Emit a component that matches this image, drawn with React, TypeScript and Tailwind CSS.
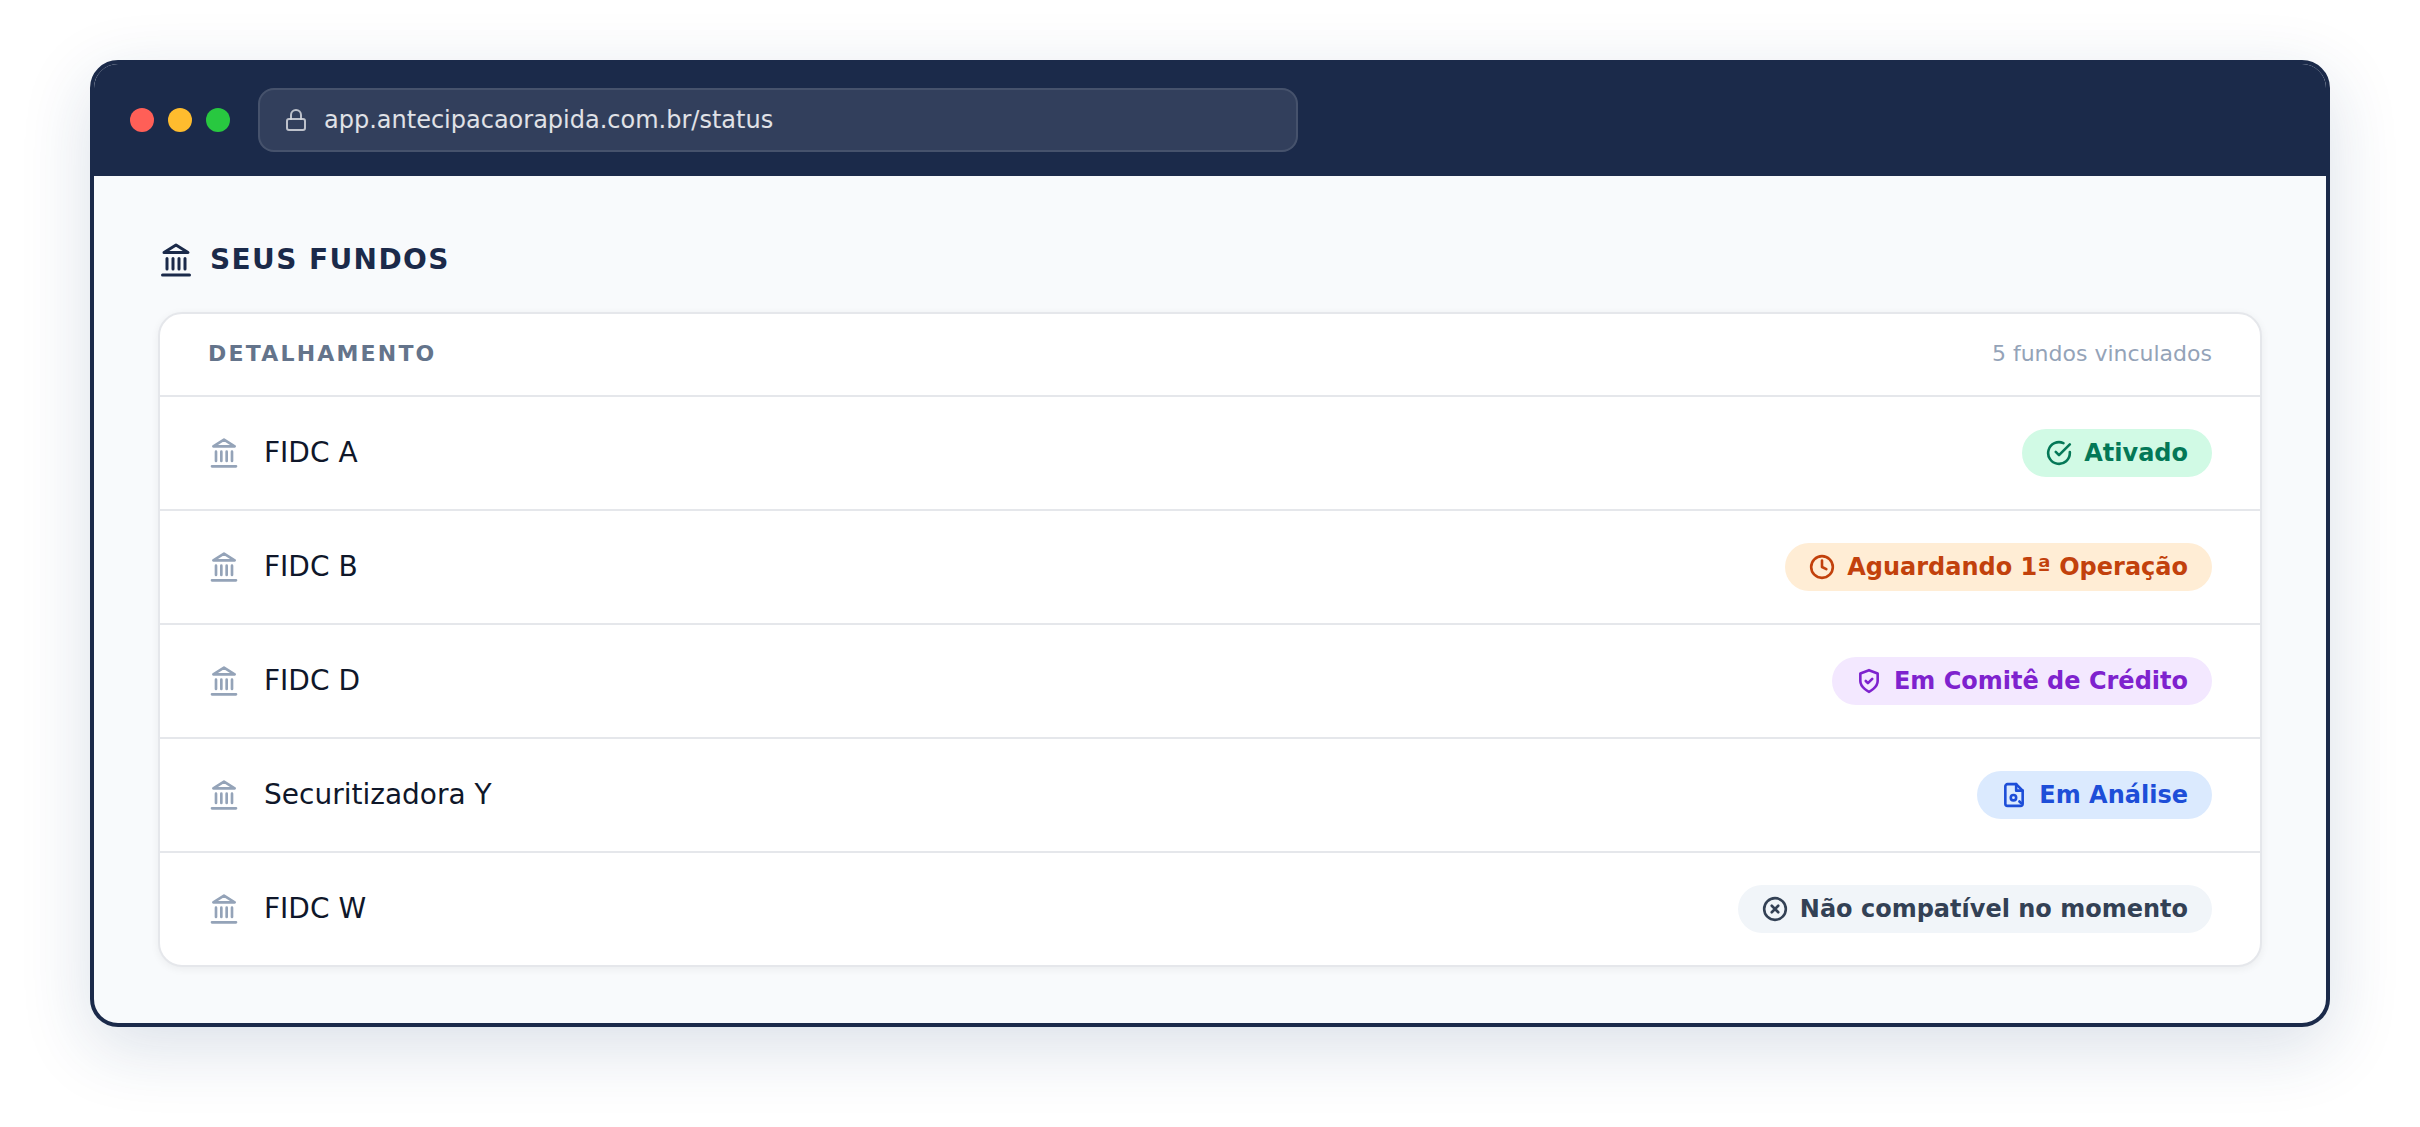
import type { ReactNode } from 'react';

type Status = 'ativado' | 'aguardando' | 'comite' | 'analise' | 'incompativel';

interface Fund {
  name: string;
  status: Status;
}

const funds: Fund[] = [
  { name: 'FIDC A', status: 'ativado' },
  { name: 'FIDC B', status: 'aguardando' },
  { name: 'FIDC D', status: 'comite' },
  { name: 'Securitizadora Y', status: 'analise' },
  { name: 'FIDC W', status: 'incompativel' },
];

const statusConfig: Record<Status, { label: string; className: string; icon: ReactNode }> = {
  ativado: {
    label: 'Ativado',
    className: 'bg-[#d1fae5] text-[#047857]',
    // Circle with check breaking out of it
    icon: (
      <>
        <path d="M22 11.08V12a10 10 0 1 1-5.93-9.14" />
        <path d="M22 4 12 14.01l-3-3" />
      </>
    ),
  },
  aguardando: {
    label: 'Aguardando 1ª Operação',
    className: 'bg-[#ffedd5] text-[#c2410c]',
    // Clock
    icon: (
      <>
        <circle cx="12" cy="12" r="10" />
        <path d="M12 6v6l4 2" />
      </>
    ),
  },
  comite: {
    label: 'Em Comitê de Crédito',
    className: 'bg-[#f3e8ff] text-[#7e22ce]',
    // Shield with check
    icon: (
      <>
        <path d="M12 22s8-4 8-10V5l-8-3-8 3v7c0 6 8 10 8 10z" />
        <path d="m9 12 2 2 4-4" />
      </>
    ),
  },
  analise: {
    label: 'Em Análise',
    className: 'bg-[#dbeafe] text-[#1d4ed8]',
    // Document with magnifier
    icon: (
      <>
        <path d="M14 2H6a2 2 0 0 0-2 2v16a2 2 0 0 0 2 2h12a2 2 0 0 0 2-2V8z" />
        <path d="M14 2v6h6" />
        <circle cx="11.5" cy="14.5" r="2.5" />
        <path d="m17 18 1.5 1.5" />
      </>
    ),
  },
  incompativel: {
    label: 'Não compatível no momento',
    className: 'bg-[#f1f5f9] text-[#334155]',
    // Circle with cross
    icon: (
      <>
        <circle cx="12" cy="12" r="10" />
        <path d="m15 9-6 6M9 9l6 6" />
      </>
    ),
  },
};

function BankIcon({ className }: { className: string }) {
  return (
    <svg viewBox="0 0 24 24" fill="none" stroke="currentColor" strokeWidth={2} strokeLinecap="round" strokeLinejoin="round" className={className}>
      <path d="M3 22h18M6 18v-7M10 18v-7M14 18v-7M18 18v-7" />
      <polygon points="12 2 20 7 4 7" />
    </svg>
  );
}

function LockIcon({ className }: { className: string }) {
  return (
    <svg viewBox="0 0 24 24" fill="none" stroke="currentColor" strokeWidth={2} strokeLinecap="round" strokeLinejoin="round" className={className}>
      <rect x="3" y="11" width="18" height="11" rx="2" />
      <path d="M7 11V7a5 5 0 0 1 10 0v4" />
    </svg>
  );
}

function StatusBadge({ status }: { status: Status }) {
  const { label, className, icon } = statusConfig[status];
  return (
    <span className={`inline-flex items-center gap-3 h-12 px-6 rounded-full text-2xl font-bold whitespace-nowrap ${className}`}>
      <svg viewBox="0 0 24 24" fill="none" stroke="currentColor" strokeWidth={2.4} strokeLinecap="round" strokeLinejoin="round" className="w-[26px] h-[26px]">
        {icon}
      </svg>
      {label}
    </span>
  );
}

export default function App() {
  return (
    <div className="bg-white px-[90px] pt-[60px] pb-[100px] font-['DejaVu_Sans',sans-serif]">
      <main className="rounded-[28px] border-4 border-[#1b2a4a] bg-[#f8fafc] overflow-hidden shadow-[0_20px_70px_rgba(27,60,115,0.16)]">

        {/* Browser bar */}
        <div className="flex items-center bg-[#1b2a4a] px-9 py-6">
          <div className="flex gap-[14px] mr-7">
            <span className="w-6 h-6 rounded-full bg-[#ff5f57]" />
            <span className="w-6 h-6 rounded-full bg-[#febc2e]" />
            <span className="w-6 h-6 rounded-full bg-[#28c840]" />
          </div>
          <div className="flex items-center gap-4 flex-1 max-w-[1040px] h-16 px-6 rounded-2xl border-2 border-white/10 bg-white/10 text-white/85">
            <LockIcon className="w-6 h-6 opacity-80" />
            <span className="text-2xl">app.antecipacaorapida.com.br/status</span>
          </div>
        </div>

        <section className="px-16 pt-16 pb-14">
          <div className="flex items-center gap-4 mb-8">
            <BankIcon className="w-9 h-9 text-[#1b2a4a]" />
            <h1 className="text-[28px] leading-10 font-bold tracking-[0.05em] text-[#1b2a4a]">SEUS FUNDOS</h1>
          </div>

          {/* Fund list */}
          <div className="rounded-3xl border-2 border-gray-200 bg-white overflow-hidden shadow-[0_2px_8px_rgba(0,0,0,0.06)]">
            <div className="flex items-center justify-between px-12 pt-[27px] pb-[29px] text-[22px] leading-[25px]">
              <h2 className="font-bold tracking-widest text-[#64748b]">DETALHAMENTO</h2>
              <span className="text-[#94a3b8]">5 fundos vinculados</span>
            </div>
            <ul>
              {funds.map((fund) => (
                <li key={fund.name} className="flex items-center justify-between px-12 h-[114px] border-t-2 border-gray-200">
                  <div className="flex items-center gap-6">
                    <BankIcon className="w-8 h-8 text-[#94a3b8]" />
                    <span className="text-[28px] text-[#0f172a]">{fund.name}</span>
                  </div>
                  <StatusBadge status={fund.status} />
                </li>
              ))}
            </ul>
          </div>
        </section>
      </main>
    </div>
  );
}
